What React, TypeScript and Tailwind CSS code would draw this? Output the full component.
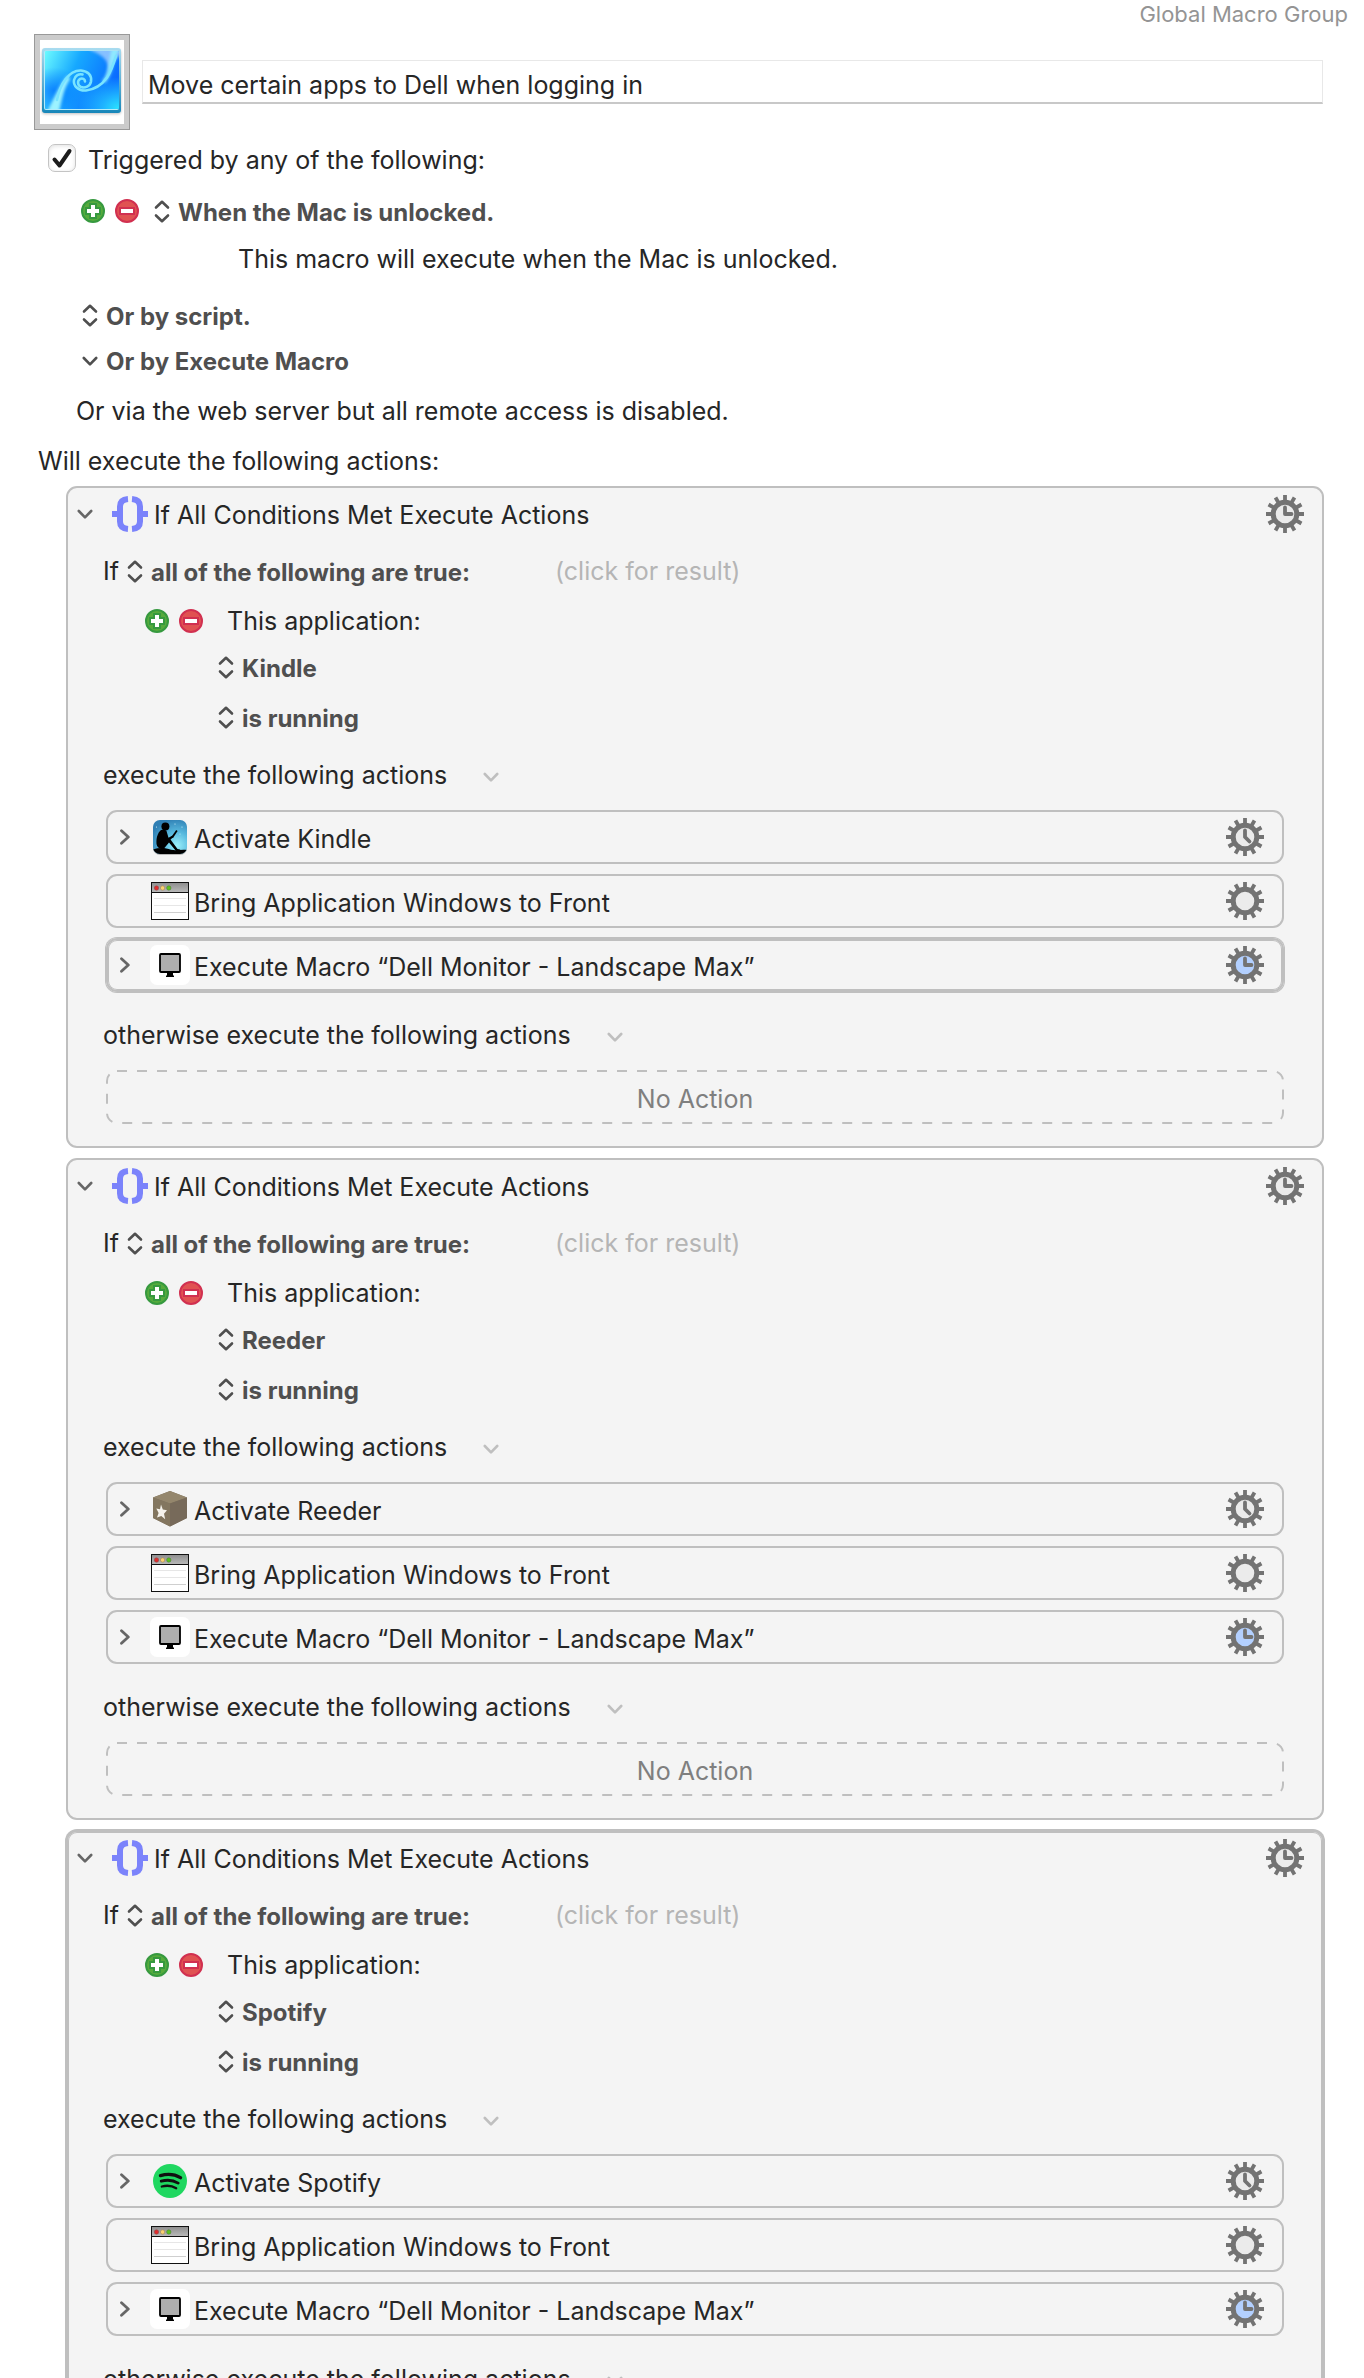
import { useState, type ReactNode } from "react";
import clsx from "clsx";

type Face = "three" | "five" | "blank" | "blue";

type App = {
	name: string;
	icon: ReactNode;
	selected?: boolean;
	selectedRow?: number;
};

function UpDownIcon() {
	return (
		<svg className="h-6 w-4 shrink-0" viewBox="0 0 16 24" fill="none" stroke="#4f4f4f" strokeWidth="2.6" strokeLinecap="round" strokeLinejoin="round">
			<path d="M2 8.5 8 2.8l6 5.7M2 16.5l6 5.7 6-5.7" />
		</svg>
	);
}

function ChevronDown({ className }: { className?: string }) {
	return (
		<svg className={clsx("h-3 w-4 shrink-0", className)} viewBox="0 0 16 12" fill="none" stroke="currentColor" strokeWidth="2.6" strokeLinecap="round" strokeLinejoin="round">
			<path d="M1.800 3 8 9.300 14.200 3" />
		</svg>
	);
}

function ChevronRight() {
	return (
		<svg className="h-4 w-3 shrink-0 text-[#666]" viewBox="0 0 12 16" fill="none" stroke="currentColor" strokeWidth="2.8" strokeLinecap="round" strokeLinejoin="round">
			<path d="m1.500 1.800 6.800 6.200-6.800 6.200" />
		</svg>
	);
}

function BracesIcon() {
	return (
		<svg className="size-9 shrink-0" viewBox="0 0 36 36" fill="none" stroke="#7b83fb" strokeWidth="6">
			<path d="M16 3C11 3.400 8 6 8 10.500v15C8 30 11 32.600 16 33" />
			<path d="M20 3c5 .4 8 3 8 7.500v15c0 4.500-3 7.100-8 7.500" />
			<path d="M0 18h10M26 18h10" />
		</svg>
	);
}

const HANDS: Record<Face, string> = {
	three: "M19 12.500V19h6.500",
	five: "M19 12.500V19l4.500 4.500",
	blank: "",
	blue: "M19 12.500V19h6.500",
};

function GearIcon({ face }: { face: Face }) {
	return (
		<svg className="size-[38px]" viewBox="0 0 38 38" fill="none" stroke="#737373">
			{[0, 30, 60, 90, 120, 150].map((angle) => (
				<path key={angle} d="M19 0v7M19 31v7" strokeWidth="3.800" transform={`rotate(${angle} 19 19)`} />
			))}
			<circle cx="19" cy="19" r="11.800" strokeWidth="5" fill={face === "blue" ? "#b3d0ff" : "#ebebeb"} />
			<path d={HANDS[face]} strokeWidth="3.800" strokeLinecap="round" strokeLinejoin="round" />
		</svg>
	);
}

function PlusIcon() {
	return (
		<svg className="size-6" viewBox="0 0 24 24">
			<circle cx="12" cy="12" r="11" fill="#56ab3c" stroke="#36993f" strokeWidth="2" />
			<path d="M12 4v16M4 12h16" stroke="#36993f" strokeWidth="8" />
			<path d="M12 6v12M6 12h12" stroke="#fff" strokeWidth="4" />
		</svg>
	);
}

function MinusIcon() {
	return (
		<svg className="size-6" viewBox="0 0 24 24">
			<circle cx="12" cy="12" r="11" fill="#e05252" stroke="#d13050" strokeWidth="2" />
			<path d="M4 12h16" stroke="#d13050" strokeWidth="8" />
			<path d="M6 12h12" stroke="#fff" strokeWidth="4" />
		</svg>
	);
}

function SwirlIcon() {
	return (
		<svg className="size-[84px]" viewBox="0 0 84 84">
			<defs>
				<linearGradient id="sea" x1="0" y1="0" x2="1" y2=".35">
					<stop offset="0" stopColor="#6cfbff" />
					<stop offset=".45" stopColor="#16a8ff" />
					<stop offset="1" stopColor="#0a6cff" />
				</linearGradient>
				<linearGradient id="rim" x1="0" y1="0" x2="0" y2="1">
					<stop offset="0" stopColor="#a9dcf0" />
					<stop offset="1" stopColor="#1787ba" />
				</linearGradient>
				<radialGradient id="shoal" cx="1" cy="1" r=".55">
					<stop offset="0" stopColor="#2ce4ff" />
					<stop offset="1" stopColor="#2ce4ff" stopOpacity="0" />
				</radialGradient>
				<radialGradient id="deep" cx=".12" cy=".68" r=".4">
					<stop offset="0" stopColor="#0070ff" stopOpacity=".75" />
					<stop offset="1" stopColor="#0070ff" stopOpacity="0" />
				</radialGradient>
				<filter id="mist" x="-30%" y="-30%" width="160%" height="160%">
					<feGaussianBlur stdDeviation="1.800" />
				</filter>
				<clipPath id="pane">
					<rect x="5" y="11" width="74" height="58" rx="1" />
				</clipPath>
			</defs>
			<rect x="2" y="10" width="79" height="64" rx="3" fill="#000" opacity=".25" filter="url(#mist)" />
			<rect x="2" y="8" width="79" height="65" rx="3" fill="url(#rim)" />
			<rect x="4" y="10.500" width="75" height="59.500" rx="2" fill="#b4ecfa" />
			<g clipPath="url(#pane)">
				<rect x="5" y="11" width="74" height="58" fill="url(#sea)" />
				<rect x="5" y="11" width="74" height="58" fill="url(#shoal)" />
				<rect x="5" y="11" width="74" height="58" fill="url(#deep)" />
				<path d="M50 8h32v6C72 20 70 30 66 38c4-12 4-20-16-28z" fill="#b9d8ff" opacity=".7" filter="url(#mist)" />
				<path d="M7 72C15 56 20 44 28 35l2 4C23 50 22 60 19 72z" fill="#9df3ff" filter="url(#mist)" />
				<path d="M80 8C72 22 73 34 65 43l-3-2C70 32 68 20 72 8z" fill="#8feaff" filter="url(#mist)" />
				<g fill="none" stroke="#79e4ff" strokeLinecap="round" strokeWidth="2.600">
					<path d="M17 60C20 44 29 30 41 30.500c7 .5 11 5 10 11-1 5-6 7-10 5.500-3.500-1.500-4-6-1-8 2.500-1.300 5 .3 5 2.500" />
					<path d="M76 16C72 30 66 48 46 50.500c-8 .5-13-5-12-10.500 1-4.500 5-6.500 8.500-5.500" />
				</g>
			</g>
		</svg>
	);
}

function KindleIcon() {
	return (
		<svg className="size-[38px]" viewBox="0 0 38 38">
			<defs>
				<radialGradient id="dusk" cx=".7" cy=".75" r=".8">
					<stop offset="0" stopColor="#9bf0fb" />
					<stop offset=".5" stopColor="#58b9de" />
					<stop offset="1" stopColor="#2f7fb4" />
				</radialGradient>
				<clipPath id="kindle">
					<rect x="2" y="2" width="34" height="34" rx="7" />
				</clipPath>
			</defs>
			<rect x="2" y="3" width="34" height="34" rx="7" fill="#000" opacity=".25" />
			<rect x="2" y="2" width="34" height="34" rx="7" fill="url(#dusk)" />
			<g clipPath="url(#kindle)">
				<circle cx="14.400" cy="8.400" r="4" />
				<path d="M10 12C6.500 15 5 20 5.500 26c.5 3 2.500 4.500 5 4.500h2.500l5-6 7 8.500h5l-1-1.500-2.500-.5-7-9.500 3-2.500-1-1.500-4 2.300L15.500 13l-2-1.500z" />
				<path d="m20.300 19 4.900-6.900 1.400.9-4.600 7z" />
				<path d="M2 31.500c6-2 12-2 18 .3 6 1 10-.5 16 .2v5H2z" />
			</g>
			<g fill="#d5f3fb">
				<circle cx="5.500" cy="9" r=".6" />
				<circle cx="24" cy="6" r=".6" />
				<circle cx="31" cy="9" r=".6" />
				<circle cx="29" cy="16" r=".5" />
			</g>
		</svg>
	);
}

function CrateIcon() {
	return (
		<svg className="size-[38px]" viewBox="0 0 38 38">
			<path d="m19 1 17 6.500v20.500L19 36.500 2 28V7.500z" fill="#7d705d" />
			<path d="m19 1 17 6.500L19 13.500 2 7.500z" fill="#94866c" />
			<path d="M2 7.500l17 6v23L2 28z" fill="#83765f" />
			<path d="M19 13.500 36 7.500V28l-17 8.500z" fill="#776a5a" />
			<path d="m10 14.500 1.800 5 4.200.8-3 3.400 1.200 5.500-3.900-3.200-4.300 1.600 1.600-4.600-2.300-4.600 3.700.8z" fill="#f6f3ec" />
		</svg>
	);
}

function SpotifyIcon() {
	return (
		<svg className="size-[38px]" viewBox="0 0 38 38" fill="none" stroke="#101010" strokeLinecap="round">
			<circle cx="19" cy="19" r="17" fill="#1fd760" stroke="none" />
			<path d="M9.500 13.600c6.500-1.900 14.500-1.200 20 2" strokeWidth="3.400" />
			<path d="M10.200 19.200c5.800-1.600 12.300-.9 17 1.900" strokeWidth="2.800" />
			<path d="M10.800 24.500c5-1.300 10.300-.8 14.400 1.700" strokeWidth="2.300" />
		</svg>
	);
}

function WindowIcon() {
	return (
		<svg className="size-[38px]" viewBox="0 0 38 38">
			<defs>
				<linearGradient id="bar" x1="0" y1="0" x2="0" y2="1">
					<stop offset="0" stopColor="#8f8f8f" />
					<stop offset="1" stopColor="#b8b8b8" />
				</linearGradient>
			</defs>
			<rect x=".5" y=".5" width="37" height="37" fill="#fff" stroke="#111" />
			<path d="M1 1h36v9H1z" fill="url(#bar)" />
			<path d="M1 10.500h36" stroke="#111" />
			<circle cx="5.500" cy="6" r="2.200" fill="#e02b2b" stroke="#8d4a4a" strokeWidth=".6" />
			<circle cx="11.600" cy="6" r="2.200" fill="#fbd070" stroke="#98815a" strokeWidth=".6" />
			<circle cx="17.800" cy="6" r="2.200" fill="#5cc11d" stroke="#54803c" strokeWidth=".6" />
			<path d="M3 16.500h32M3 23.500h32" stroke="#e6e6e6" />
			<path d="M3 30.500h32" stroke="#cfcfcf" />
		</svg>
	);
}

function MonitorIcon() {
	return (
		<svg className="size-10" viewBox="0 0 40 40">
			<rect width="40" height="40" rx="7" fill="#fff" />
			<rect x="10" y="9" width="20" height="18" rx="1" fill="#aeaeae" stroke="#000" strokeWidth="1.800" />
			<path d="M17 27h6v3.500h1V32h-8v-1.500h1z" />
		</svg>
	);
}

function Popup({ label, value }: { label: string; value: string }) {
	return (
		<label className="flex items-center gap-2 font-bold text-[#4f4f4f] text-2xl">
			<UpDownIcon />
			<select aria-label={label} className="h-8 appearance-none bg-transparent pt-0.5 outline-none">
				<option>{value}</option>
			</select>
		</label>
	);
}

function AddRemove({ what }: { what: string }) {
	return (
		<div className="flex gap-2.5">
			<button type="button" aria-label={`Add ${what}`}>
				<PlusIcon />
			</button>
			<button type="button" aria-label={`Remove ${what}`}>
				<MinusIcon />
			</button>
		</div>
	);
}

function ActionRow({ title, icon, face, expandable, selected }: { title: string; icon: ReactNode; face: Face; expandable: boolean; selected?: boolean }) {
	return (
		<li
			className={clsx(
				"flex h-[54px] items-center rounded-[11px] border-2 border-[#bfbfbf] pr-[18px] pl-3",
				selected && "ring-1 ring-[#bfbfbf] inset-ring-1 inset-ring-[#bfbfbf]",
			)}
		>
			<div className="flex w-[30px]">
				{expandable && (
					<button type="button" aria-label={`Expand ${title}`}>
						<ChevronRight />
					</button>
				)}
			</div>
			<div className="flex w-10 justify-center">{icon}</div>
			<span className="ml-1 pt-1">{title}</span>
			<button type="button" aria-label={`Options for ${title}`} className="ml-auto">
				<GearIcon face={face} />
			</button>
		</li>
	);
}

function ConditionCard({ app }: { app: App }) {
	const [open, setOpen] = useState(true);

	return (
		<section
			className={clsx(
				"rounded-[11px] border-2 border-[#bfbfbf] bg-[#f4f4f4] pt-1.5 pb-[22px]",
				app.selected && "ring-1 ring-[#bfbfbf] inset-ring-1 inset-ring-[#bfbfbf]",
			)}
		>
			<header className="flex h-10 items-center pr-[18px] pl-[9px]">
				<button type="button" aria-label="Toggle action" onClick={() => setOpen(!open)}>
					<ChevronDown className="text-[#666]" />
				</button>
				<div className="ml-[19px]">
					<BracesIcon />
				</div>
				<h2 className="ml-1.5 pt-0.5">If All Conditions Met Execute Actions</h2>
				<button type="button" aria-label="Action options" className="ml-auto">
					<GearIcon face="three" />
				</button>
			</header>

			{open && (
				<div className="pr-[38px] pl-[35px]">
					<div className="mt-[21px] flex items-center gap-2">
						<span>If</span>
						<Popup label="Match" value="all of the following are true:" />
						<button type="button" className="ml-[76px] text-[#b5b5b5]">
							(click for result)
						</button>
					</div>
					<div className="mt-[18px] flex items-center gap-6 pl-[42px]">
						<AddRemove what="condition" />
						<span>This application:</span>
					</div>
					<div className="mt-3.5 flex pl-[115px]">
						<Popup label="Application" value={app.name} />
					</div>
					<div className="mt-[18px] flex pl-[115px]">
						<Popup label="State" value="is running" />
					</div>

					<div className="mt-[26px] flex items-center gap-9">
						<h3>execute the following actions</h3>
						<button type="button" aria-label="Actions menu" className="pt-1 text-[#bfbfbf]">
							<ChevronDown />
						</button>
					</div>
					<ul className="mt-[19px] ml-[3px] flex flex-col gap-2.5">
						<ActionRow title={`Activate ${app.name}`} icon={app.icon} face="five" expandable selected={app.selectedRow === 0} />
						<ActionRow title="Bring Application Windows to Front" icon={<WindowIcon />} face="blank" expandable={false} selected={app.selectedRow === 1} />
						<ActionRow title="Execute Macro “Dell Monitor - Landscape Max”" icon={<MonitorIcon />} face="blue" expandable selected={app.selectedRow === 2} />
					</ul>

					<div className="mt-[27px] flex items-center gap-9">
						<h3>otherwise execute the following actions</h3>
						<button type="button" aria-label="Otherwise menu" className="pt-1 text-[#bfbfbf]">
							<ChevronDown />
						</button>
					</div>
					<div className="relative mt-[19px] ml-[3px] flex h-[54px] items-center justify-center pt-1 text-[#7f7f7f]">
						<svg className="absolute inset-0 size-full" fill="none" stroke="#bfbfbf" strokeWidth="2" strokeDasharray="10 10">
							<rect x="1" y="1" rx="10" className="h-[calc(100%-2px)] w-[calc(100%-2px)]" />
						</svg>
						No Action
					</div>
				</div>
			)}
		</section>
	);
}

const apps: App[] = [
	{ name: "Kindle", icon: <KindleIcon />, selectedRow: 2 },
	{ name: "Reeder", icon: <CrateIcon /> },
	{ name: "Spotify", icon: <SpotifyIcon />, selected: true },
];

export default function MacroEditor() {
	const [title, setTitle] = useState("Move certain apps to Dell when logging in");
	const [triggered, setTriggered] = useState(true);

	return (
		<div className="h-screen overflow-y-auto bg-white font-['Inter',sans-serif] text-[#262626] text-[25px] leading-8 [scrollbar-width:none]">
			<p className="pr-4 text-right text-[#949494] text-[22px] leading-7">Global Macro Group</p>

			<div className="mt-1.5 flex items-center gap-3 pr-[41px] pl-[34px]">
				<button type="button" aria-label="Macro icon" className="shrink-0 border border-[#999] bg-white">
					<div className="border-5 border-[#cbcbcb]">
						<SwirlIcon />
					</div>
				</button>
				<input
					aria-label="Macro name"
					className="h-11 min-w-0 flex-1 border border-[#e8e8e8] border-b-2 border-b-[#c8c8c8] px-[5px] pt-1.5 outline-none"
					value={title}
					onChange={(e) => setTitle(e.target.value)}
				/>
			</div>

			<div className="mt-3.5 flex items-start pl-12">
				<label className="flex gap-3">
					<span className="relative size-7">
						<input
							type="checkbox"
							checked={triggered}
							onChange={(e) => setTriggered(e.target.checked)}
							className="peer block size-7 appearance-none rounded-[7px] border border-[#c4c4c4] bg-white shadow-[inset_0_1px_4px_#0000001f]"
						/>
						<svg className="pointer-events-none absolute inset-0 hidden size-7 peer-checked:block" viewBox="0 0 28 28" fill="none" stroke="#1c1c1c" strokeWidth="4" strokeLinecap="round" strokeLinejoin="round">
							<path d="m6.500 15.500 5 6L21.500 7" />
						</svg>
					</span>
					Triggered by any of the following:
				</label>
			</div>

			<div className="mt-[19px] flex items-center gap-[15px] pl-[81px]">
				<AddRemove what="trigger" />
				<Popup label="Trigger" value="When the Mac is unlocked." />
			</div>
			<p className="mt-4 pl-[238px]">This macro will execute when the Mac is unlocked.</p>

			<div className="mt-6 flex pl-[82px]">
				<Popup label="Script trigger" value="Or by script." />
			</div>
			<button type="button" className="mt-3.5 ml-[82px] flex h-8 items-center gap-2 font-bold text-[#4f4f4f] text-2xl leading-8">
				<ChevronDown />
				<span className="pt-0.5">Or by Execute Macro</span>
			</button>
			<p className="mt-[18px] pl-[76px]">Or via the web server but all remote access is disabled.</p>
			<p className="mt-[18px] pl-[38px]">Will execute the following actions:</p>

			<main className="mt-[9px] flex flex-col gap-2.5 pr-10 pb-2.5 pl-[66px]">
				{apps.map((app) => (
					<ConditionCard key={app.name} app={app} />
				))}
			</main>
		</div>
	);
}
